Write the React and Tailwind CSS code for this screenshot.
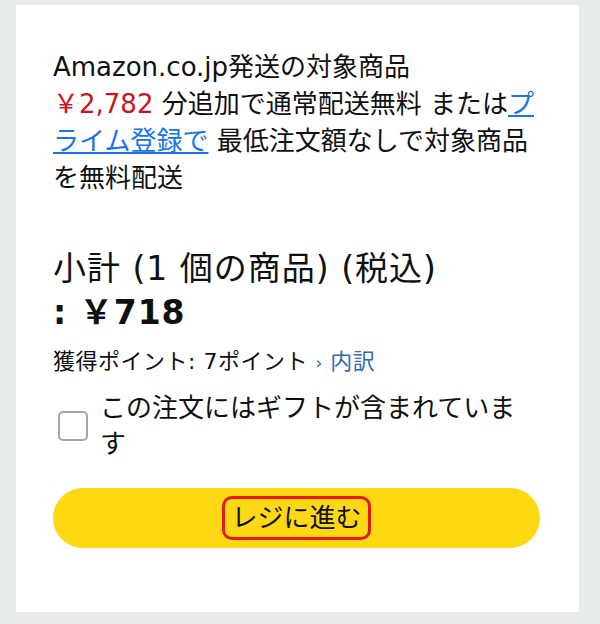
import React, { useState } from 'react';

export default function App() {
  const [gift, setGift] = useState(false);
  return (
    <div
      className="w-[600px] h-[624px] bg-[#e8ebeb] pt-[5px] pl-[16px] text-[#0f1111]"
      style={{ fontFamily: '"DejaVu Sans", "Noto Sans CJK JP", sans-serif' }}
    >
      <div className="w-[563px] h-[607px] bg-white pl-[37px] pr-[39px] pt-[44px]">
        <p className="text-[26px] leading-[37px]">
          Amazon.co.jp発送の対象商品
          <br />
          <span className="text-[#c8161d]">￥2,782</span> 分追加で通常配送無料 または
          <a href="#" className="text-[#1a73e8] underline underline-offset-2">プライム登録で</a> 最低注文額なしで対象商品を無料配送
        </p>

        <div className="mt-[50px] text-[33px] leading-[44px] tracking-[1px]">
          <div>小計 (1 個の商品) (税込)</div>
          <div className="font-bold">: ￥718</div>
        </div>

        <div className="mt-[13px] text-[22px] leading-[28px] tracking-[0.5px]">
          獲得ポイント: 7ポイント{' '}
          <a href="#" className="text-[#2f6cb3]">
            <span className="text-[17px]">›</span> 内訳
          </a>
        </div>

        <label className="mt-[13px] flex items-center gap-[12px] cursor-pointer">
          <span className="ml-[5px] shrink-0">
            <input
              type="checkbox"
              checked={gift}
              onChange={e => setGift(e.target.checked)}
              className="appearance-none block w-[30px] h-[30px] border-2 border-[#a6a6a6] rounded-[5px] bg-white checked:bg-[#2f6cb3]"
            />
          </span>
          <span className="text-[26px] leading-[36px]">この注文にはギフトが含まれています</span>
        </label>

        <button className="mt-[26px] w-full h-[60px] rounded-full bg-[#ffd814] flex items-center justify-center">
          <span className="text-[26px] leading-[36px] px-[6px] py-[1px] border-[3px] border-[#e3191c] rounded-[10px]">
            レジに進む
          </span>
        </button>
      </div>
    </div>
  );
}
